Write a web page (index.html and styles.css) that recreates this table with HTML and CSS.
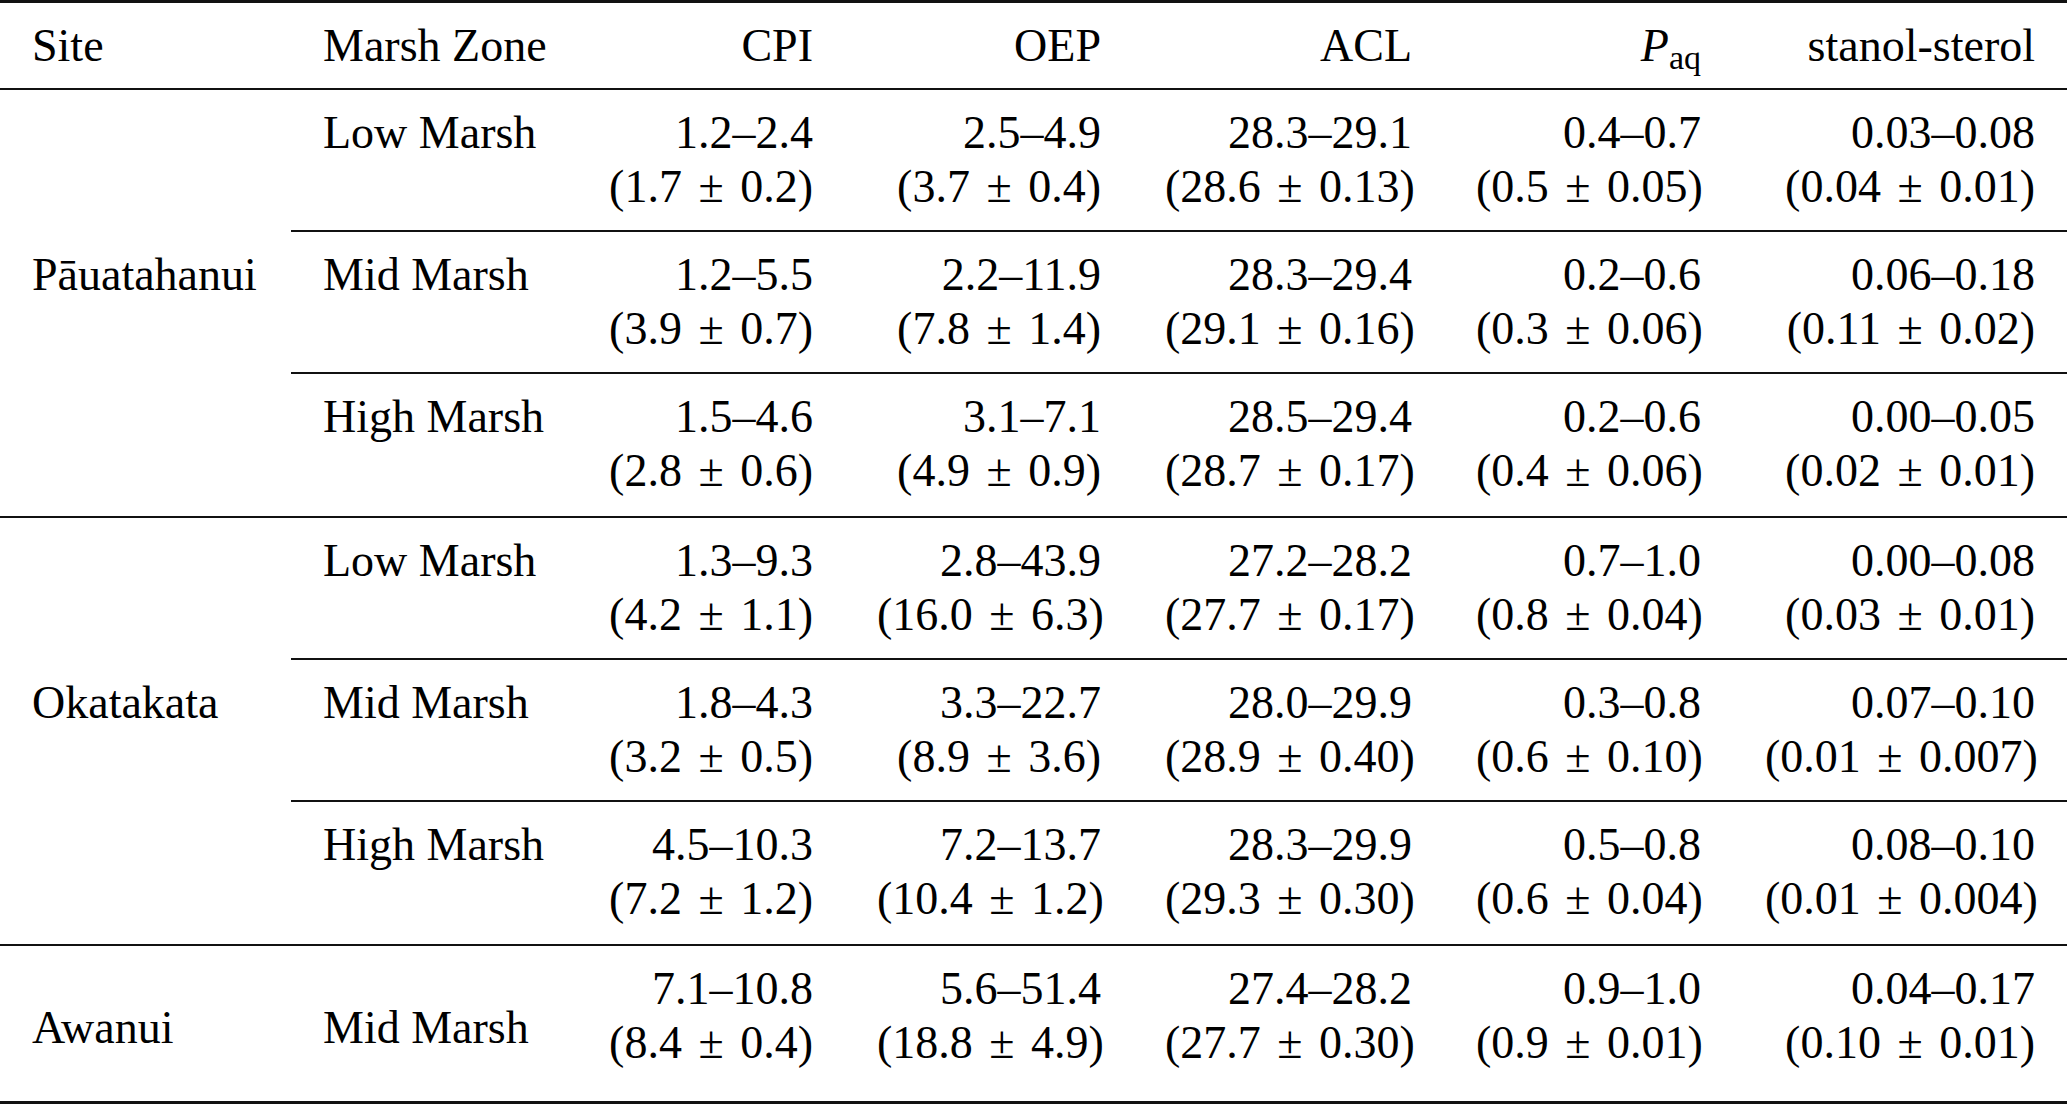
FILE: index.html
```html
<!DOCTYPE html>
<html lang="en">
<head>
<meta charset="utf-8">
<title>Biomarker indices by site and marsh zone</title>
<link rel="stylesheet" href="styles.css">
</head>
<body>
<table class="tbl">
  <colgroup>
    <col class="c-site"><col class="c-zone"><col class="c-cpi"><col class="c-oep"><col class="c-acl"><col class="c-paq"><col class="c-ss">
  </colgroup>
  <thead>
    <tr>
      <th class="l">Site</th>
      <th class="l">Marsh Zone</th>
      <th class="r">CPI</th>
      <th class="r">OEP</th>
      <th class="r">ACL</th>
      <th class="r"><i>P</i><sub>aq</sub></th>
      <th class="r">stanol-sterol</th>
    </tr>
  </thead>
  <tbody>
    <tr class="part">
      <td class="l"></td>
      <td class="l">Low Marsh</td>
      <td class="r">1.2–2.4<br>(1.7 <span class="pm">±</span> 0.2)</td>
      <td class="r">2.5–4.9<br>(3.7 <span class="pm">±</span> 0.4)</td>
      <td class="r">28.3–29.1<br>(28.6 <span class="pm">±</span> 0.13)</td>
      <td class="r">0.4–0.7<br>(0.5 <span class="pm">±</span> 0.05)</td>
      <td class="r">0.03–0.08<br>(0.04 <span class="pm">±</span> 0.01)</td>
    </tr>
    <tr class="part">
      <td class="l">Pāuatahanui</td>
      <td class="l">Mid Marsh</td>
      <td class="r">1.2–5.5<br>(3.9 <span class="pm">±</span> 0.7)</td>
      <td class="r">2.2–11.9<br>(7.8 <span class="pm">±</span> 1.4)</td>
      <td class="r">28.3–29.4<br>(29.1 <span class="pm">±</span> 0.16)</td>
      <td class="r">0.2–0.6<br>(0.3 <span class="pm">±</span> 0.06)</td>
      <td class="r">0.06–0.18<br>(0.11 <span class="pm">±</span> 0.02)</td>
    </tr>
    <tr class="full">
      <td class="l"></td>
      <td class="l">High Marsh</td>
      <td class="r">1.5–4.6<br>(2.8 <span class="pm">±</span> 0.6)</td>
      <td class="r">3.1–7.1<br>(4.9 <span class="pm">±</span> 0.9)</td>
      <td class="r">28.5–29.4<br>(28.7 <span class="pm">±</span> 0.17)</td>
      <td class="r">0.2–0.6<br>(0.4 <span class="pm">±</span> 0.06)</td>
      <td class="r">0.00–0.05<br>(0.02 <span class="pm">±</span> 0.01)</td>
    </tr>
    <tr class="part">
      <td class="l"></td>
      <td class="l">Low Marsh</td>
      <td class="r">1.3–9.3<br>(4.2 <span class="pm">±</span> 1.1)</td>
      <td class="r">2.8–43.9<br>(16.0 <span class="pm">±</span> 6.3)</td>
      <td class="r">27.2–28.2<br>(27.7 <span class="pm">±</span> 0.17)</td>
      <td class="r">0.7–1.0<br>(0.8 <span class="pm">±</span> 0.04)</td>
      <td class="r">0.00–0.08<br>(0.03 <span class="pm">±</span> 0.01)</td>
    </tr>
    <tr class="part">
      <td class="l">Okatakata</td>
      <td class="l">Mid Marsh</td>
      <td class="r">1.8–4.3<br>(3.2 <span class="pm">±</span> 0.5)</td>
      <td class="r">3.3–22.7<br>(8.9 <span class="pm">±</span> 3.6)</td>
      <td class="r">28.0–29.9<br>(28.9 <span class="pm">±</span> 0.40)</td>
      <td class="r">0.3–0.8<br>(0.6 <span class="pm">±</span> 0.10)</td>
      <td class="r">0.07–0.10<br>(0.01 <span class="pm">±</span> 0.007)</td>
    </tr>
    <tr class="full">
      <td class="l"></td>
      <td class="l">High Marsh</td>
      <td class="r">4.5–10.3<br>(7.2 <span class="pm">±</span> 1.2)</td>
      <td class="r">7.2–13.7<br>(10.4 <span class="pm">±</span> 1.2)</td>
      <td class="r">28.3–29.9<br>(29.3 <span class="pm">±</span> 0.30)</td>
      <td class="r">0.5–0.8<br>(0.6 <span class="pm">±</span> 0.04)</td>
      <td class="r">0.08–0.10<br>(0.01 <span class="pm">±</span> 0.004)</td>
    </tr>
    <tr class="last">
      <td class="l low">Awanui</td>
      <td class="l low">Mid Marsh</td>
      <td class="r">7.1–10.8<br>(8.4 <span class="pm">±</span> 0.4)</td>
      <td class="r">5.6–51.4<br>(18.8 <span class="pm">±</span> 4.9)</td>
      <td class="r">27.4–28.2<br>(27.7 <span class="pm">±</span> 0.30)</td>
      <td class="r">0.9–1.0<br>(0.9 <span class="pm">±</span> 0.01)</td>
      <td class="r">0.04–0.17<br>(0.10 <span class="pm">±</span> 0.01)</td>
    </tr>
  </tbody>
</table>
</body>
</html>
```

FILE: styles.css
```css
html, body {
  margin: 0;
  padding: 0;
  background: #ffffff;
}

body {
  font-family: "Liberation Serif", "Times New Roman", serif;
  color: #000000;
}

.tbl {
  width: 2067px;
  table-layout: fixed;
  border-collapse: separate;
  border-spacing: 0;
  font-size: 46px;
  line-height: 54px;
}

.c-site { width: 291px; }
.c-zone { width: 285px; }
.c-cpi  { width: 269px; }
.c-oep  { width: 288px; }
.c-acl  { width: 311px; }
.c-paq  { width: 289px; }
.c-ss   { width: 334px; }

.tbl th,
.tbl td {
  padding: 16px 32px;
  font-weight: normal;
  vertical-align: top;
  white-space: nowrap;
}

.tbl thead th {
  border-top: 3px solid #111111;
  border-bottom: 2px solid #111111;
  padding-top: 16px;
  padding-bottom: 15px;
}

.l { text-align: left; }
.r { text-align: right; }

.pm {
  margin: 0 5px;
}

.tbl sub {
  font-size: 0.74em;
  line-height: 0;
  vertical-align: -0.24em;
}

.tbl i {
  font-style: italic;
}

tr.part td + td {
  border-bottom: 2px solid #111111;
}

tr.part td:first-child {
  padding-bottom: 18px;
}

tr.full td {
  border-bottom: 2px solid #111111;
  padding-bottom: 18px;
}

tr.last td {
  border-bottom: 3px solid #111111;
  padding-bottom: 31px;
}

tr.last td.low {
  padding-top: 55px;
}
```
